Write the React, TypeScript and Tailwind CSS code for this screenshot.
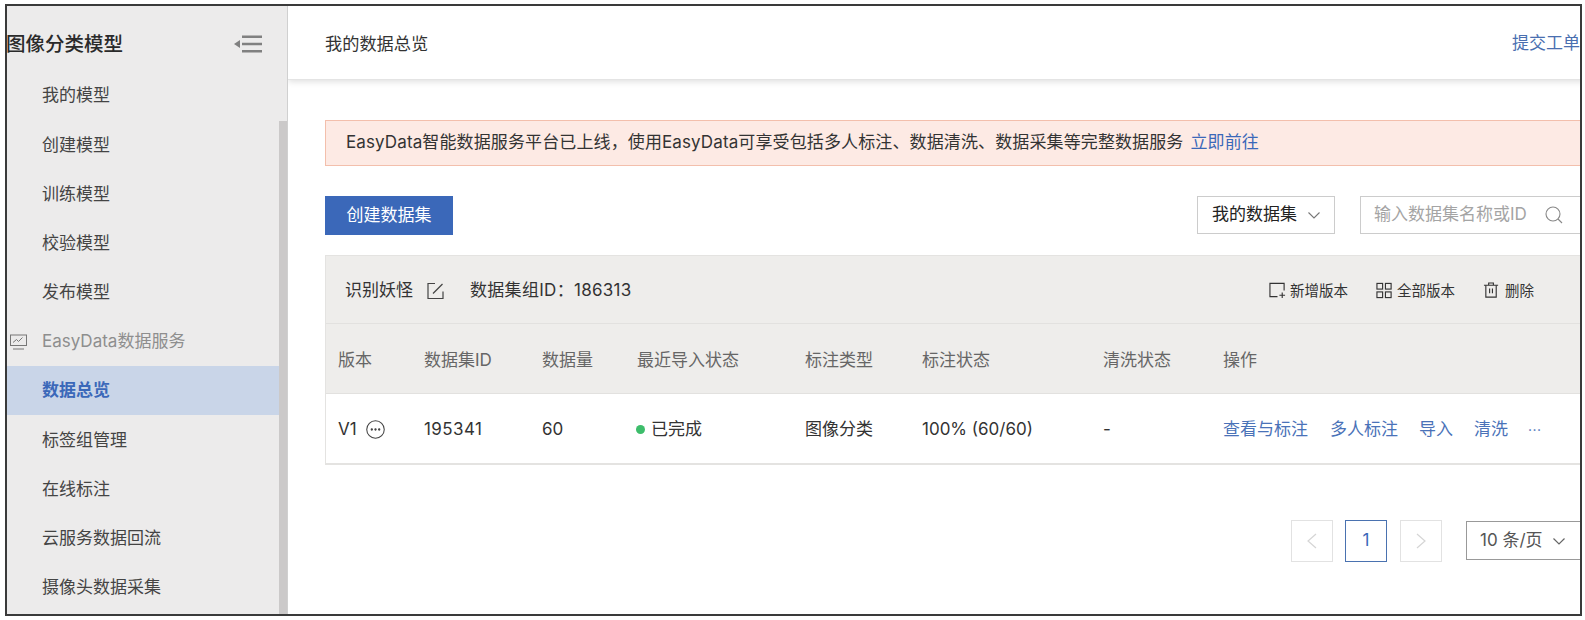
import React from "react";

const items = ["我的模型","创建模型","训练模型","校验模型","发布模型"];
const items2 = ["标签组管理","在线标注","云服务数据回流","摄像头数据采集"];

function Stroke({ children, size = 18, box = 18, className = "" }: { children: React.ReactNode; size?: number; box?: number; className?: string }) {
  return (
    <svg width={size} height={size} viewBox={`0 0 ${box} ${box}`} fill="none" stroke="currentColor" strokeWidth="1.2" className={className}>
      {children}
    </svg>
  );
}

function MenuItem({ label }: { label: string }) {
  return <div className="h-[49.2px] flex items-center pl-[35px] pt-[2px] text-[17px] text-[#444]">{label}</div>;
}

export default function App() {
  return (
    <div className="w-[1585px] h-[620px] bg-white pl-[5px] pt-[4px] pr-[3px] pb-[4px] overflow-hidden font-['Inter','Noto_Sans_CJK_SC',sans-serif]">
      <div className="w-full h-full border-2 border-[#3a3a3a] flex overflow-hidden bg-white">
        <aside className="relative w-[281px] shrink-0 h-full bg-[#ecebeb] border-r border-[#d0d0d0] overflow-hidden">
          <div className="h-[64.5px] flex items-center justify-between pr-[23px]">
            <span className="text-[19.5px] font-medium text-[#2a2a2a] leading-none mt-[13px] -ml-[1px]">图像分类模型</span>
            <svg width="30" height="18" viewBox="0 0 30 18" className="mt-[12px] text-[#808080]" fill="currentColor">
              <path d="M0 9l6-4v8z" />
              <rect x="8" y="0.5" width="20" height="2.5" />
              <rect x="8" y="7.75" width="20" height="2.5" />
              <rect x="8" y="15" width="20" height="2.5" />
            </svg>
          </div>
          {items.map((t) => <MenuItem key={t} label={t} />)}
          <div className="h-[49.2px] flex items-center pt-[2px] text-[17px] text-[#8e8e8e]">
            <svg width="18" height="18" viewBox="0 0 18 18" fill="none" stroke="#777" strokeWidth="1" className="ml-[3px] mr-[14px]">
              <rect x="0.5" y="2" width="16" height="10.5" />
              <path d="M3 9.5l3.5-3 2 2 4-4" />
              <path d="M3 16h11" />
            </svg>
            EasyData数据服务
          </div>
          <div className="h-[49.2px] flex items-center pl-[35px] pt-[1px] text-[17px] font-semibold text-[#3b68b9] bg-[#c9d5e8]">数据总览</div>
          {items2.map((t) => <MenuItem key={t} label={t} />)}
          <div className="absolute right-0 top-[115px] bottom-0 w-[8px] bg-[#cbc9c9]" />
        </aside>

        <main className="flex-1 min-w-0 overflow-hidden">
          <div className="w-[1300px]">
            <header className="h-[74px] bg-white flex items-center justify-between pl-[37px] pr-[6px] pt-[3px] border-b border-[#e4e4e4] shadow-[0_2px_6px_rgba(0,0,0,0.12)] text-[17.2px] text-[#333]">
              <span>我的数据总览</span>
              <span className="text-[#4a6fb0] text-[17px] mr-[2px]">提交工单</span>
            </header>
            <div className="ml-[37px] w-[1263px]">
              <div className="mt-[40px] h-[46px] border border-[#f3bfac] bg-[#fdeae4] flex items-center pl-[20px] text-[17px] tracking-[0.12px] text-[#333]">
                EasyData智能数据服务平台已上线，使用EasyData可享受包括多人标注、数据清洗、数据采集等完整数据服务
                <span className="text-[#3b68b9] ml-[7px]">立即前往</span>
              </div>

              <div className="mt-[30px] h-[39px] flex items-start">
                <button className="w-[128px] h-[39px] shrink-0 bg-[#3b68b9] text-white text-[17px]">创建数据集</button>
                <div className="ml-[744px] w-[138px] h-[38px] shrink-0 border border-[#ccc] flex items-center pl-[14px] text-[17px] text-[#222]">
                  我的数据集
                  <svg width="14" height="14" viewBox="0 0 14 14" fill="none" stroke="#777" strokeWidth="1.1" className="ml-[10px]"><path d="M1.5 4.5L7 10l5.5-5.5" /></svg>
                </div>
                <div className="ml-[25px] w-[240px] h-[38px] shrink-0 border border-[#ccc] flex items-center pl-[13px] text-[17px] text-[#a4a4a4]">
                  输入数据集名称或ID
                  <svg width="20" height="20" viewBox="0 0 20 20" fill="none" stroke="#888" strokeWidth="1.1" className="ml-[17px]"><circle cx="9" cy="9" r="7" /><path d="M14 14l4 4" /></svg>
                </div>
              </div>

              <div className="mt-[20px] border border-[#e4e3e1]">
                <div className="h-[68px] bg-[#eeedeb] border-b border-[#e2e1df] flex items-center pt-[2px] text-[17px] text-[#333] pl-[19px]">
                  <span>识别妖怪</span>
                  <Stroke size={18} className="ml-[14px] text-[#444]">
                    <path d="M8 1.5H1v15h15V9.5" />
                    <path d="M6 11.5L15.5 2" />
                  </Stroke>
                  <span className="ml-[25px] tracking-[0.3px]">数据集组ID：186313</span>
                  <div className="ml-auto flex items-center text-[14.5px] tracking-normal mr-[53px]">
                    <Stroke size={17} className="text-[#333]">
                      <path d="M9 15.5H1V1.5h15V9" />
                      <path d="M11 14h6M14 11v6" />
                    </Stroke>
                    <span className="ml-[4px]">新增版本</span>
                    <Stroke size={17} className="ml-[28px] text-[#333]">
                      <rect x="1" y="1.5" width="6" height="6" />
                      <rect x="10" y="1.5" width="6" height="6" />
                      <rect x="1" y="10.5" width="6" height="6" />
                      <rect x="10" y="10.5" width="6" height="6" />
                    </Stroke>
                    <span className="ml-[4px]">全部版本</span>
                    <Stroke size={17} className="ml-[28px] text-[#333]">
                      <path d="M1 3.5h15M6 3.5V1h5v2.5" />
                      <path d="M3 3.5v12.5h11V3.5" />
                      <path d="M7 7v5M10 7v5" />
                    </Stroke>
                    <span className="ml-[5px]">删除</span>
                  </div>
                </div>

                <div className="h-[70px] bg-[#eeedeb] border-b border-[#e2e1df] grid grid-cols-[85px_118px_95px_168px_117px_181px_120px_1fr] items-center pl-[13px] pt-[4px] text-[17px] text-[#666]">
                  <span className="-ml-[1px]">版本</span><span>数据集ID</span><span>数据量</span><span>最近导入状态</span>
                  <span>标注类型</span><span>标注状态</span><span>清洗状态</span><span>操作</span>
                </div>

                <div className="h-[69px] bg-white grid grid-cols-[85px_118px_95px_168px_117px_181px_120px_1fr] items-center pl-[13px] pt-[2px] text-[17px] text-[#333]">
                  <span className="flex items-center -ml-[1px]">
                    V1
                    <svg width="19" height="19" viewBox="0 0 18 18" fill="none" stroke="#444" strokeWidth="1" className="ml-[9px]">
                      <circle cx="9" cy="9" r="8.3" />
                      <circle cx="5.5" cy="9" r="0.6" fill="#444" />
                      <circle cx="9" cy="9" r="0.6" fill="#444" />
                      <circle cx="12.5" cy="9" r="0.6" fill="#444" />
                    </svg>
                  </span>
                  <span className="tracking-[0.4px]">195341</span>
                  <span>60</span>
                  <span className="flex items-center -ml-[1px]">
                    <span className="w-[9px] h-[9px] rounded-full bg-[#3dbd6b] mr-[6px]" />已完成
                  </span>
                  <span>图像分类</span>
                  <span>100% (60/60)</span>
                  <span>-</span>
                  <span className="flex items-center text-[#4a72b8]">
                    <span>查看与标注</span>
                    <span className="ml-[22px]">多人标注</span>
                    <span className="ml-[21px]">导入</span>
                    <span className="ml-[21px]">清洗</span>
                    <span className="ml-[20px] text-[14px] tracking-[0.5px]">···</span>
                  </span>
                </div>
              </div>
              <div className="border-t border-[#e4e3e1]" />

              <div className="mt-[55px] flex items-start">
                <div className="ml-[966px] w-[42px] h-[42px] shrink-0 border border-[#e2e2e2] flex items-center justify-center text-[#d5d5d5]">
                  <svg width="14" height="20" viewBox="0 0 14 20" fill="none" stroke="currentColor" strokeWidth="1.2"><path d="M11 3L3 10l8 7" /></svg>
                </div>
                <div className="ml-[12px] w-[42px] h-[42px] shrink-0 border border-[#4a72b0] flex items-center justify-center text-[17px] text-[#3b68b9]">1</div>
                <div className="ml-[13px] w-[42px] h-[42px] shrink-0 border border-[#e2e2e2] flex items-center justify-center text-[#d5d5d5]">
                  <svg width="14" height="20" viewBox="0 0 14 20" fill="none" stroke="currentColor" strokeWidth="1.2"><path d="M3 3l8 7-8 7" /></svg>
                </div>
                <div className="ml-[24px] mt-[1px] w-[130px] h-[39px] shrink-0 border border-[#999] flex items-center pl-[13px] text-[17px] text-[#555]">
                  10 条/页
                  <svg width="14" height="14" viewBox="0 0 14 14" fill="none" stroke="#666" strokeWidth="1.2" className="ml-[9px]"><path d="M1.5 4.5L7 10l5.5-5.5" /></svg>
                </div>
              </div>
            </div>
          </div>
        </main>
      </div>
    </div>
  );
}
